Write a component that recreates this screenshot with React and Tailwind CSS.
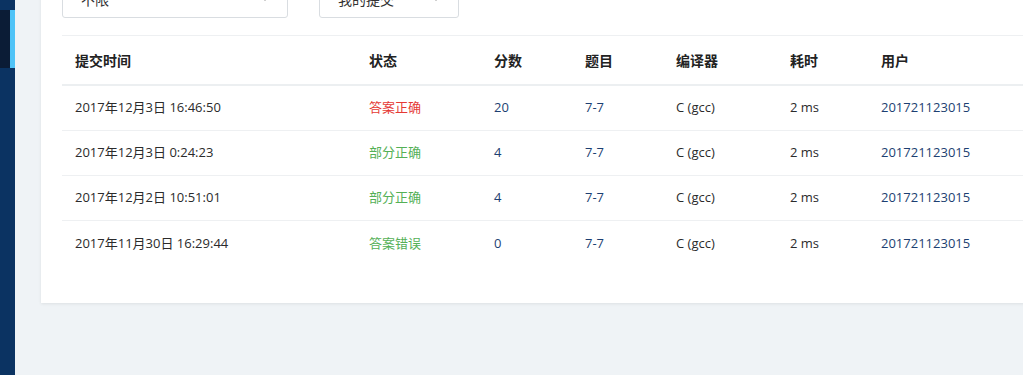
import { ChevronDown } from 'lucide-react';

const ROWS = [
    { time: '2017年12月3日 16:46:50', status: '答案正确', tone: 'red', score: '20' },
    { time: '2017年12月3日 0:24:23', status: '部分正确', tone: 'green', score: '4' },
    { time: '2017年12月2日 10:51:01', status: '部分正确', tone: 'green', score: '4' },
    { time: '2017年11月30日 16:29:44', status: '答案错误', tone: 'green', score: '0' },
];

const COLS = ['提交时间', '状态', '分数', '题目', '编译器', '耗时', '用户'];
const WIDTHS = ['w-[294px]', 'w-[125px]', 'w-[91px]', 'w-[91px]', 'w-[114px]', 'w-[91px]', 'w-[160px]'];

const Select = ({ label, width }) => (
    <div className={`${width} h-[38px] flex items-center justify-between pl-[18px] pr-[16px] border border-[#d9dde1] rounded-[3px] bg-white`}>
        <span className="text-[14px] text-[#333]">{label}</span>
        <ChevronDown size={12} strokeWidth={1.5} className="text-[#777]" />
    </div>
);

export default function App() {
    return (
        <div
            className="flex h-[375px] w-[1023px] overflow-hidden bg-[#eff3f6]"
            style={{ fontFamily: '"Open Sans", "Noto Sans CJK SC", sans-serif' }}
        >
            {/* Sidebar edge */}
            <aside className="w-[15px] shrink-0 bg-[#0b3362] pt-[10px]">
                <div className="h-[58px] flex">
                    <div className="w-[10px] bg-[#0b1c36]" />
                    <div className="w-[5px] bg-[#4fc3f7]" />
                </div>
            </aside>

            {/* Main */}
            <main className="flex-1 pl-[26px]">
                <div className="-mt-[20px] w-[1000px] bg-white shadow-[0_1px_3px_rgba(0,0,0,0.08)] pl-[21px] pb-[37px]">
                    <div className="flex gap-[31px]">
                        <Select label="不限" width="w-[226px]" />
                        <Select label="我的提交" width="w-[140px]" />
                    </div>

                    <div className="mt-[17px] text-[13px] text-[#2b2b2b]">
                        {/* Header */}
                        <div className="flex h-[51px] items-center border-t border-[#eef0f2] border-b-2 border-b-[#eceff1] font-bold text-[14px] text-[#222]">
                            {COLS.map((c, i) => (
                                <div key={c} className={`${WIDTHS[i]} shrink-0 pl-[13px]`}>{c}</div>
                            ))}
                        </div>

                        {/* Rows */}
                        {ROWS.map((r, idx) => (
                            <div
                                key={r.time}
                                className={`flex h-[45px] items-center ${idx < ROWS.length - 1 ? 'border-b border-[#eef0f2]' : ''}`}
                            >
                                <div className={`${WIDTHS[0]} shrink-0 pl-[13px]`}>{r.time}</div>
                                <div className={`${WIDTHS[1]} shrink-0 pl-[13px] ${r.tone === 'red' ? 'text-[#e53935]' : 'text-[#54b056]'}`}>
                                    {r.status}
                                </div>
                                <div className={`${WIDTHS[2]} shrink-0 pl-[13px] text-[#1d3f72]`}>{r.score}</div>
                                <div className={`${WIDTHS[3]} shrink-0 pl-[13px] text-[#1d3f72]`}>7-7</div>
                                <div className={`${WIDTHS[4]} shrink-0 pl-[13px]`}>C (gcc)</div>
                                <div className={`${WIDTHS[5]} shrink-0 pl-[13px]`}>2 ms</div>
                                <div className={`${WIDTHS[6]} shrink-0 pl-[13px] text-[#1d3f72]`}>201721123015</div>
                            </div>
                        ))}
                    </div>
                </div>
            </main>
        </div>
    );
}
